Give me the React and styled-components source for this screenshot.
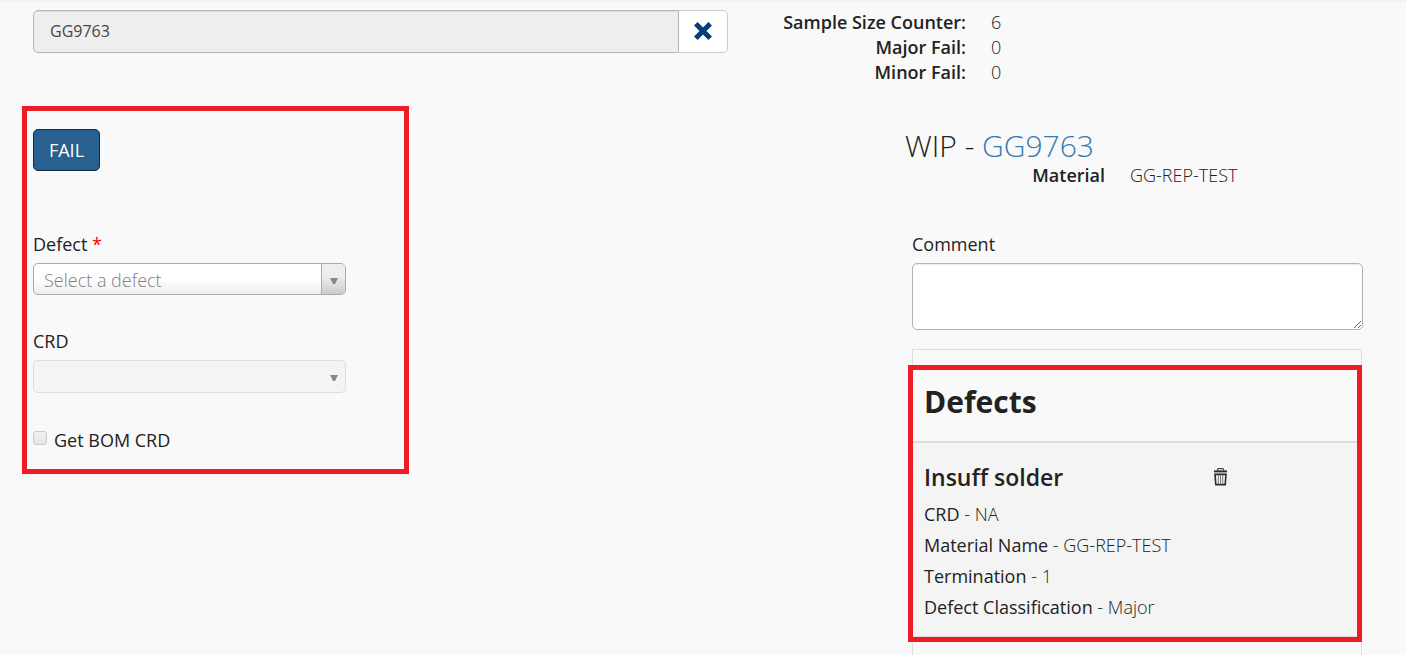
import React from "react";
import styled, { createGlobalStyle } from "styled-components";

const GlobalStyle = createGlobalStyle`
  *, *::before, *::after { box-sizing: border-box; }
  body {
    margin: 0;
    background: #f9f9f9;
    color: #222;
    font-family: "Open Sans", "Noto Sans", sans-serif;
    font-size: 18px;
    font-weight: 300;
    line-height: 25px;
  }
  button, input, select, textarea { font: inherit; color: inherit; margin: 0; }
  h1, h2, h3, p, dl, dd { margin: 0; }
`;

const Page = styled.div`
  min-height: 100vh;
  display: flex;
  flex-direction: column;
  padding-top: 10px;
  box-shadow: inset 0 2px 2px rgba(0, 0, 0, 0.03);
`;

const TopBar = styled.header`
  display: grid;
  grid-template-columns: 695fr 645fr;
  align-items: start;
  padding: 0 33px;
`;

const SearchGroup = styled.div`
  display: flex;
  height: 43px;
`;

const SearchInput = styled.input`
  flex: 1;
  min-width: 0;
  padding: 0 16px;
  font-size: 16px;
  font-weight: 400;
  color: #444;
  background: #eee;
  border: 1px solid #b5b7ba;
  border-radius: 5px 0 0 5px;
  box-shadow: inset 0 1px 1px rgba(0, 0, 0, 0.08);
`;

const ClearButton = styled.button`
  width: 49px;
  display: flex;
  align-items: center;
  justify-content: center;
  padding: 0 0 2px;
  background: #fff;
  color: #043e7a;
  border: 1px solid #ccc;
  border-left: 0;
  border-radius: 0 5px 5px 0;
`;

const Stats = styled.dl`
  display: grid;
  grid-template-columns: ${(p) => p.$label}px 1fr;
  column-gap: 25px;
`;

const StatLabel = styled.dt`
  font-weight: 650;
  text-align: right;
`;

const StatValue = styled.dd``;

const Main = styled.main`
  flex: 1;
  display: grid;
  grid-template-columns: 883fr 458fr;
  margin-top: 21px;
  padding: 0 43px 0 22px;
`;

const DefectForm = styled.form`
  align-self: start;
  width: 387px;
  max-width: 100%;
  padding: 18px 58px 16px 6px;
  border: 5px solid #ee1c25;
`;

const FailButton = styled.button`
  display: block;
  width: 67px;
  height: 42px;
  margin-bottom: 61px;
  padding: 0;
  font-weight: 400;
  color: #fff;
  background: #286090;
  border: 1px solid #122b40;
  border-radius: 5px;
`;

const Field = styled.div`
  margin-bottom: 34px;
`;

const Label = styled.label`
  display: block;
  margin-bottom: 6px;
  font-weight: 500;
`;

const Required = styled.span`
  color: #f00;
`;

const SelectBox = styled.div`
  position: relative;
`;

const Select = styled.select`
  display: block;
  appearance: none;
  width: 100%;
  height: 32px;
  padding: 2px 32px 0 10px;
  color: #808080;
  background: linear-gradient(to top, #eee 0%, #fff 50%);
  border: 1px solid #aaa;
  border-radius: 5px;

  &:disabled {
    height: 33px;
    opacity: 1;
    background: #f4f4f4;
    border-color: #ddd;
  }
`;

const SelectArrow = styled.span`
  position: absolute;
  top: 1px;
  right: 1px;
  width: 24px;
  height: 30px;
  display: flex;
  align-items: center;
  justify-content: center;
  padding-top: 4px;
  pointer-events: none;
  border-left: 1px solid ${(p) => (p.$plain ? "transparent" : "#aaa")};
  border-radius: 0 4px 4px 0;
  background: ${(p) => (p.$plain ? "none" : "linear-gradient(to top, #ccc 0%, #eee 60%)")};
`;

const CheckRow = styled.div`
  display: flex;
  gap: 7px;
  padding-top: 1px;
`;

const Checkbox = styled.input`
  appearance: none;
  width: 14px;
  height: 14px;
  margin-top: 3px;
  border: 1px solid #ccc;
  border-radius: 3px;
  background: linear-gradient(#f0f0f0, #e4e4e4);
`;

const CheckLabel = styled.label`
  font-weight: 500;
`;

const Side = styled.section`
  display: flex;
  flex-direction: column;
  padding-top: 23px;
`;

const WipTitle = styled.h1`
  margin-bottom: 1px;
  font-size: 30px;
  font-weight: 350;
  line-height: 33px;
`;

const WipLink = styled.a`
  color: #337ab7;
  text-decoration: none;
`;

const SideBody = styled.div`
  flex: 1;
  display: flex;
  flex-direction: column;
  margin-top: 44px;
  padding-left: 7px;
`;

const Comment = styled.textarea`
  display: block;
  width: 100%;
  height: 67px;
  padding: 6px 12px;
  background: #fff;
  border: 1px solid #b3b3b3;
  border-radius: 5px;
  box-shadow: inset 0 1px 1px rgba(0, 0, 0, 0.08);
  resize: vertical;
`;

const Card = styled.div`
  flex: 1;
  position: relative;
  margin: 19px 1px 0 0;
  padding: 15px 3px 12px 0;
  border: 1px solid #ddd;
  border-bottom: 0;
`;

const Highlight = styled.div`
  position: absolute;
  top: 15px;
  left: -5px;
  right: -1px;
  height: 277px;
  border: 5px solid #ee1c25;
  pointer-events: none;
`;

const CardHeading = styled.h2`
  padding: 17px 11px 19px;
  font-size: 30px;
  font-weight: 700;
  line-height: 40px;
  border-bottom: 2px solid #ddd;
`;

const DefectItem = styled.article`
  padding: 19px 0 13px 11px;
  background: #f4f4f4;
  border-bottom: 1px solid #ddd;
`;

const DefectTop = styled.div`
  display: grid;
  grid-template-columns: 2fr 1fr;
  margin-bottom: 7px;
`;

const DefectName = styled.h3`
  font-size: 23px;
  font-weight: 650;
  line-height: 30px;
`;

const TrashButton = styled.button`
  justify-self: start;
  display: flex;
  align-items: center;
  padding: 0;
  border: 0;
  background: none;
`;

const DefectLine = styled.p`
  line-height: 31px;
`;

const Term = styled.span`
  font-weight: 500;
`;

const Triangle = () => (
  <svg width="8" height="6" viewBox="0 0 8 6" aria-hidden="true">
    <path d="M0 0H8L5 6H3Z" fill="#888" />
  </svg>
);

const CrossIcon = () => (
  <svg width="20" height="20" viewBox="0 0 20 20" aria-hidden="true">
    <path d="M2.8 2.8L17.2 17.2M17.2 2.8L2.8 17.2" stroke="currentColor" strokeWidth="5" />
  </svg>
);

const TrashIcon = () => (
  <svg width="15" height="18" viewBox="0 0 15 18" aria-hidden="true">
    <path d="M4.5 2.5V1.5Q4.5 .6 5.4 .6H9.6Q10.5 .6 10.5 1.5V2.5" fill="none" stroke="#444" strokeWidth="1.2" />
    <path d="M1 2.4H14V4.4H1Z" fill="#2b2b2b" />
    <path d="M2 6.4H13L12.2 16.6H2.8Z" fill="none" stroke="#2b2b2b" strokeWidth="1.6" />
    <path d="M5.3 7V16M7.5 7V16M9.7 7V16" stroke="#777" strokeWidth="1" />
  </svg>
);

const stats = [
  ["Sample Size Counter:", "6"],
  ["Major Fail:", "0"],
  ["Minor Fail:", "0"],
];

const details = [
  ["CRD", "NA"],
  ["Material Name", "GG-REP-TEST"],
  ["Termination", "1"],
  ["Defect Classification", "Major"],
];

export default function App() {
  return (
    <Page>
      <GlobalStyle />
      <TopBar>
        <SearchGroup>
          <SearchInput type="text" aria-label="WIP number" value="GG9763" readOnly />
          <ClearButton type="button" aria-label="Clear">
            <CrossIcon />
          </ClearButton>
        </SearchGroup>
        <Stats $label={238}>
          {stats.map(([label, value]) => (
            <React.Fragment key={label}>
              <StatLabel>{label}</StatLabel>
              <StatValue>{value}</StatValue>
            </React.Fragment>
          ))}
        </Stats>
      </TopBar>
      <Main>
        <DefectForm>
          <FailButton type="button">FAIL</FailButton>
          <Field>
            <Label htmlFor="defect">
              Defect <Required>*</Required>
            </Label>
            <SelectBox>
              <Select id="defect" defaultValue="">
                <option value="">Select a defect</option>
              </Select>
              <SelectArrow>
                <Triangle />
              </SelectArrow>
            </SelectBox>
          </Field>
          <Field>
            <Label htmlFor="crd">CRD</Label>
            <SelectBox>
              <Select id="crd" disabled />
              <SelectArrow $plain>
                <Triangle />
              </SelectArrow>
            </SelectBox>
          </Field>
          <CheckRow>
            <Checkbox type="checkbox" id="bom" />
            <CheckLabel htmlFor="bom">Get BOM CRD</CheckLabel>
          </CheckRow>
        </DefectForm>
        <Side>
          <WipTitle>
            WIP - <WipLink href="#wip">GG9763</WipLink>
          </WipTitle>
          <Stats $label={200}>
            <StatLabel>Material</StatLabel>
            <StatValue>GG-REP-TEST</StatValue>
          </Stats>
          <SideBody>
            <Label htmlFor="comment">Comment</Label>
            <Comment id="comment" />
            <Card>
              <CardHeading>Defects</CardHeading>
              <DefectItem>
                <DefectTop>
                  <DefectName>Insuff solder</DefectName>
                  <TrashButton type="button" aria-label="Delete defect">
                    <TrashIcon />
                  </TrashButton>
                </DefectTop>
                {details.map(([term, value]) => (
                  <DefectLine key={term}>
                    <Term>{term}</Term> - {value}
                  </DefectLine>
                ))}
              </DefectItem>
              <Highlight />
            </Card>
          </SideBody>
        </Side>
      </Main>
    </Page>
  );
}
